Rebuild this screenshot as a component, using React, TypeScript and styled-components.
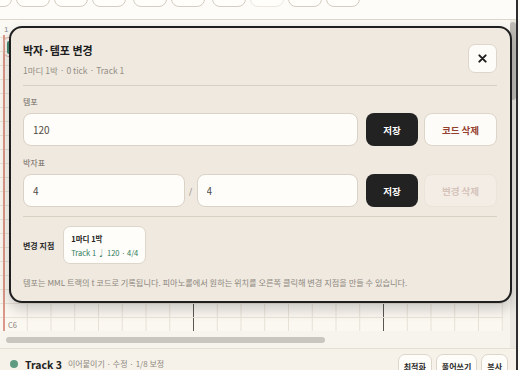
import React from "react";
import styled, { createGlobalStyle } from "styled-components";

const FONT = `"Noto Sans CJK KR", "Noto Sans", "DejaVu Sans", sans-serif`;

const Global = createGlobalStyle`
  html, body { margin: 0; padding: 0; background: #fdfcf8; overflow: hidden; }
  body { font-family: ${FONT}; }
  * { box-sizing: border-box; }
`;

const Frame = styled.div`
  width: 518px;
  height: 370px;
  overflow: hidden;
  display: flex;
  flex-direction: column;
  border-right: 2px solid #2d2d2d;
  background: #fdfcf8;
`;

const Toolbar = styled.div`
  height: 20px;
  flex-shrink: 0;
  display: flex;
  align-items: flex-start;
  gap: 7px;
  margin-left: -22px;
  border-bottom: 1px solid #dcd6cb;
`;

const ToolGroup = styled.div`
  display: flex;
  gap: 4px;
`;

const ToolButton = styled.div<{ $faint?: boolean }>`
  width: 34px;
  height: 26px;
  margin-top: -19px;
  border-radius: 8px;
  background: #fffefb;
  border: 1px solid ${(p) => (p.$faint ? "#ece8e0" : "#d4cdc1")};
`;

const Editor = styled.div`
  position: relative;
  height: 328px;
  flex-shrink: 0;
  display: flex;
  flex-direction: column;
  background: #f7f4ed;
`;

const Ruler = styled.div`
  height: 15px;
  flex-shrink: 0;
  padding: 5px 0 0 4px;
  font-family: "Liberation Sans", sans-serif;
  font-size: 8px;
  line-height: 10px;
  color: #8b8b8b;
  background: #fbf9f4;
`;

const Grid = styled.div`
  flex: 1;
  width: 503px;
  display: flex;
  flex-direction: column;
  justify-content: flex-end;
  overflow: hidden;
  background-color: #fbf8f2;
  background-image: linear-gradient(to right, #5a5753 1px, transparent 1px),
    linear-gradient(to right, #e7e1d6 1px, transparent 1px);
  background-size: 190px 100%, 23.75px 100%;
  background-position: 3px 0, 3px 0;
`;

const KeyRow = styled.div`
  height: 14px;
  flex-shrink: 0;
  border-top: 1px solid #e9e3d8;
  padding-left: 8px;
  font-size: 7.5px;
  line-height: 13px;
  color: #8a847a;
`;

const ScrollArea = styled.div`
  height: 17px;
  flex-shrink: 0;
  padding: 6px 0 0 6px;
`;

const HThumb = styled.div`
  width: 319px;
  height: 6px;
  border-radius: 3px;
  background: #c9c6c0;
`;

const VTrack = styled.div`
  position: absolute;
  right: 0;
  top: 0;
  bottom: 0;
  width: 6px;
  background: #ebe8e2;
`;

const VThumb = styled.div`
  margin-top: 2px;
  height: 78px;
  border-radius: 3px;
  background: #bebbb5;
`;

const Playhead = styled.div`
  position: absolute;
  left: 3px;
  top: 15px;
  bottom: 17px;
  width: 2px;
  background: #dc9888;
`;

const Marker = styled.div`
  position: absolute;
  left: 3px;
  top: 17px;
  width: 14px;
  height: 20px;
  border: 1.5px solid #e4aaa0;
  border-radius: 6px;
`;

const NoteBlock = styled.div`
  position: absolute;
  left: 7px;
  top: 21px;
  width: 6px;
  height: 13px;
  border-radius: 2px;
  background: #4b8a76;
`;

const Modal = styled.div`
  position: absolute;
  top: 6px;
  left: 9px;
  width: 503px;
  height: 277px;
  background: #efe9e0;
  border: 2px solid #1f1f1f;
  border-radius: 13px;
  box-shadow: 0 6px 14px rgba(0, 0, 0, 0.2);
  padding: 14px 13px 0 12px;
  display: flex;
  flex-direction: column;
`;

const Header = styled.div`
  display: flex;
  justify-content: space-between;
  align-items: flex-start;
`;

const Titles = styled.div`
  display: flex;
  flex-direction: column;
`;

const Title = styled.div`
  font-size: 11px;
  font-weight: 700;
  line-height: 16px;
  color: #1e1e1e;
`;

const Subtitle = styled.div`
  margin-top: 6px;
  font-size: 8.5px;
  line-height: 12px;
  color: #948e84;
`;

const CloseButton = styled.div`
  margin-top: 2px;
  width: 29px;
  height: 29px;
  display: flex;
  align-items: center;
  justify-content: center;
  background: #fdfcf8;
  border: 1px solid #ddd6ca;
  border-radius: 7px;
`;

const Divider = styled.div<{ $top: number }>`
  margin-top: ${(p) => p.$top}px;
  height: 1px;
  flex-shrink: 0;
  background: #d8d0c3;
`;

const FieldLabel = styled.div<{ $top: number }>`
  margin-top: ${(p) => p.$top}px;
  font-size: 8px;
  line-height: 12px;
  color: #6d675e;
`;

const FieldRow = styled.div`
  margin-top: 5px;
  height: 33px;
  display: flex;
  gap: 6px;
`;

const InputGroup = styled.div`
  flex: 1;
  display: flex;
  margin-right: 2px;
`;

const TextInput = styled.input`
  flex: 1;
  min-width: 0;
  height: 33px;
  padding: 0 9px;
  background: #fefdf9;
  border: 1px solid #d9d2c6;
  border-radius: 8px;
  font-family: ${FONT};
  font-size: 10px;
  color: #514c45;
  outline: none;
`;

const Slash = styled.div`
  width: 12px;
  display: flex;
  align-items: center;
  justify-content: center;
  font-size: 8px;
  color: #7a746b;
`;

const SaveButton = styled.div`
  width: 52px;
  display: flex;
  align-items: center;
  justify-content: center;
  background: #222222;
  border-radius: 8px;
  color: #ffffff;
  font-size: 9.5px;
  font-weight: 700;
`;

const DeleteButton = styled.div<{ $disabled?: boolean }>`
  width: 73px;
  display: flex;
  align-items: center;
  justify-content: center;
  border-radius: 8px;
  font-size: 9.5px;
  font-weight: 700;
  background: ${(p) => (p.$disabled ? "#f3ede6" : "#fefcf8")};
  border: 1px solid ${(p) => (p.$disabled ? "#ebe4da" : "#ddd5c9")};
  color: ${(p) => (p.$disabled ? "#d6c3ba" : "#94402f")};
`;

const PointRow = styled.div`
  margin-top: 9px;
  display: flex;
  align-items: center;
  gap: 9px;
`;

const PointLabel = styled.div`
  font-size: 8px;
  font-weight: 700;
  color: #2a2a2a;
`;

const PointCard = styled.div`
  height: 38px;
  padding: 6px 7px 0 7px;
  display: flex;
  flex-direction: column;
  gap: 3px;
  background: #fefdf9;
  border: 1px solid #ddd6ca;
  border-radius: 7px;
`;

const CardTitle = styled.div`
  font-size: 7.5px;
  font-weight: 700;
  line-height: 11px;
  color: #222;
`;

const CardMeta = styled.div`
  font-size: 7.5px;
  line-height: 12px;
  color: #2f7a5a;
`;

const Footnote = styled.div`
  margin-top: 12px;
  font-size: 8.2px;
  line-height: 12px;
  color: #8d877d;
`;

const BottomBar = styled.div`
  flex: 1;
  display: flex;
  align-items: flex-start;
  padding: 4px 8px 0 10px;
  border-top: 1px solid #e4ded3;
  background: #f6f2ea;
`;

const TrackInfo = styled.div`
  height: 22px;
  flex: 1;
  display: flex;
  align-items: center;
`;

const Dot = styled.div`
  width: 8px;
  height: 8px;
  border-radius: 50%;
  background: #5e9b80;
  margin-right: 7px;
`;

const TrackName = styled.div`
  font-size: 10.5px;
  font-weight: 700;
  line-height: 11px;
  color: #222;
  margin-right: 6px;
`;

const TrackMeta = styled.div`
  font-size: 8px;
  line-height: 10px;
  color: #8d877d;
`;

const BarButtons = styled.div`
  display: flex;
  gap: 4px;
  margin-top: 1px;
`;

const BarButton = styled.div`
  height: 24px;
  padding: 0 5px;
  display: flex;
  align-items: center;
  background: #fefdf9;
  border: 1px solid #ddd6ca;
  border-radius: 7px;
  font-size: 8px;
  font-weight: 700;
  color: #2a2a2a;
`;

const CloseIcon = () => (
  <svg width="9" height="9" viewBox="0 0 10 10">
    <path d="M1.5 1.5 L8.5 8.5 M8.5 1.5 L1.5 8.5" stroke="#1e1e1e" strokeWidth="2.2" strokeLinecap="round" />
  </svg>
);

const toolGroups = [[0, 1, 2, 3], [4, 5], [6, 7, 8, 9]];

export default function App() {
  const rows = Array.from({ length: 22 });
  return (
    <>
      <Global />
      <Frame>
        <Toolbar>
          {toolGroups.map((g, gi) => (
            <ToolGroup key={gi}>
              {g.map((i) => (
                <ToolButton key={i} $faint={i === 7} />
              ))}
            </ToolGroup>
          ))}
        </Toolbar>
        <Editor>
          <Ruler>1</Ruler>
          <Grid>
            {rows.map((_, i) => (
              <KeyRow key={i}>{i === rows.length - 1 ? "C6" : ""}</KeyRow>
            ))}
          </Grid>
          <ScrollArea>
            <HThumb />
          </ScrollArea>
          <VTrack>
            <VThumb />
          </VTrack>
          <Playhead />
          <Marker />
          <NoteBlock />
          <Modal>
            <Header>
              <Titles>
                <Title>박자·템포 변경</Title>
                <Subtitle>1마디 1박 · 0 tick · Track 1</Subtitle>
              </Titles>
              <CloseButton>
                <CloseIcon />
              </CloseButton>
            </Header>
            <Divider $top={9} />
            <FieldLabel $top={10}>템포</FieldLabel>
            <FieldRow>
              <InputGroup>
                <TextInput readOnly value="120" />
              </InputGroup>
              <SaveButton>저장</SaveButton>
              <DeleteButton>코드 삭제</DeleteButton>
            </FieldRow>
            <FieldLabel $top={11}>박자표</FieldLabel>
            <FieldRow>
              <InputGroup>
                <TextInput readOnly value="4" />
                <Slash>/</Slash>
                <TextInput readOnly value="4" />
              </InputGroup>
              <SaveButton>저장</SaveButton>
              <DeleteButton $disabled>변경 삭제</DeleteButton>
            </FieldRow>
            <Divider $top={9} />
            <PointRow>
              <PointLabel>변경 지점</PointLabel>
              <PointCard>
                <CardTitle>1마디 1박</CardTitle>
                <CardMeta>Track 1 ♩ 120 · 4/4</CardMeta>
              </PointCard>
            </PointRow>
            <Footnote>
              템포는 MML 트랙의 t 코드로 기록됩니다. 피아노롤에서 원하는 위치를 오른쪽 클릭해 변경 지점을 만들 수 있습니다.
            </Footnote>
          </Modal>
        </Editor>
        <BottomBar>
          <TrackInfo>
            <Dot />
            <TrackName>Track 3</TrackName>
            <TrackMeta>이어붙이기 · 수정 · 1/8 보정</TrackMeta>
          </TrackInfo>
          <BarButtons>
            <BarButton>최적화</BarButton>
            <BarButton>풀어쓰기</BarButton>
            <BarButton>복사</BarButton>
          </BarButtons>
        </BottomBar>
      </Frame>
    </>
  );
}
